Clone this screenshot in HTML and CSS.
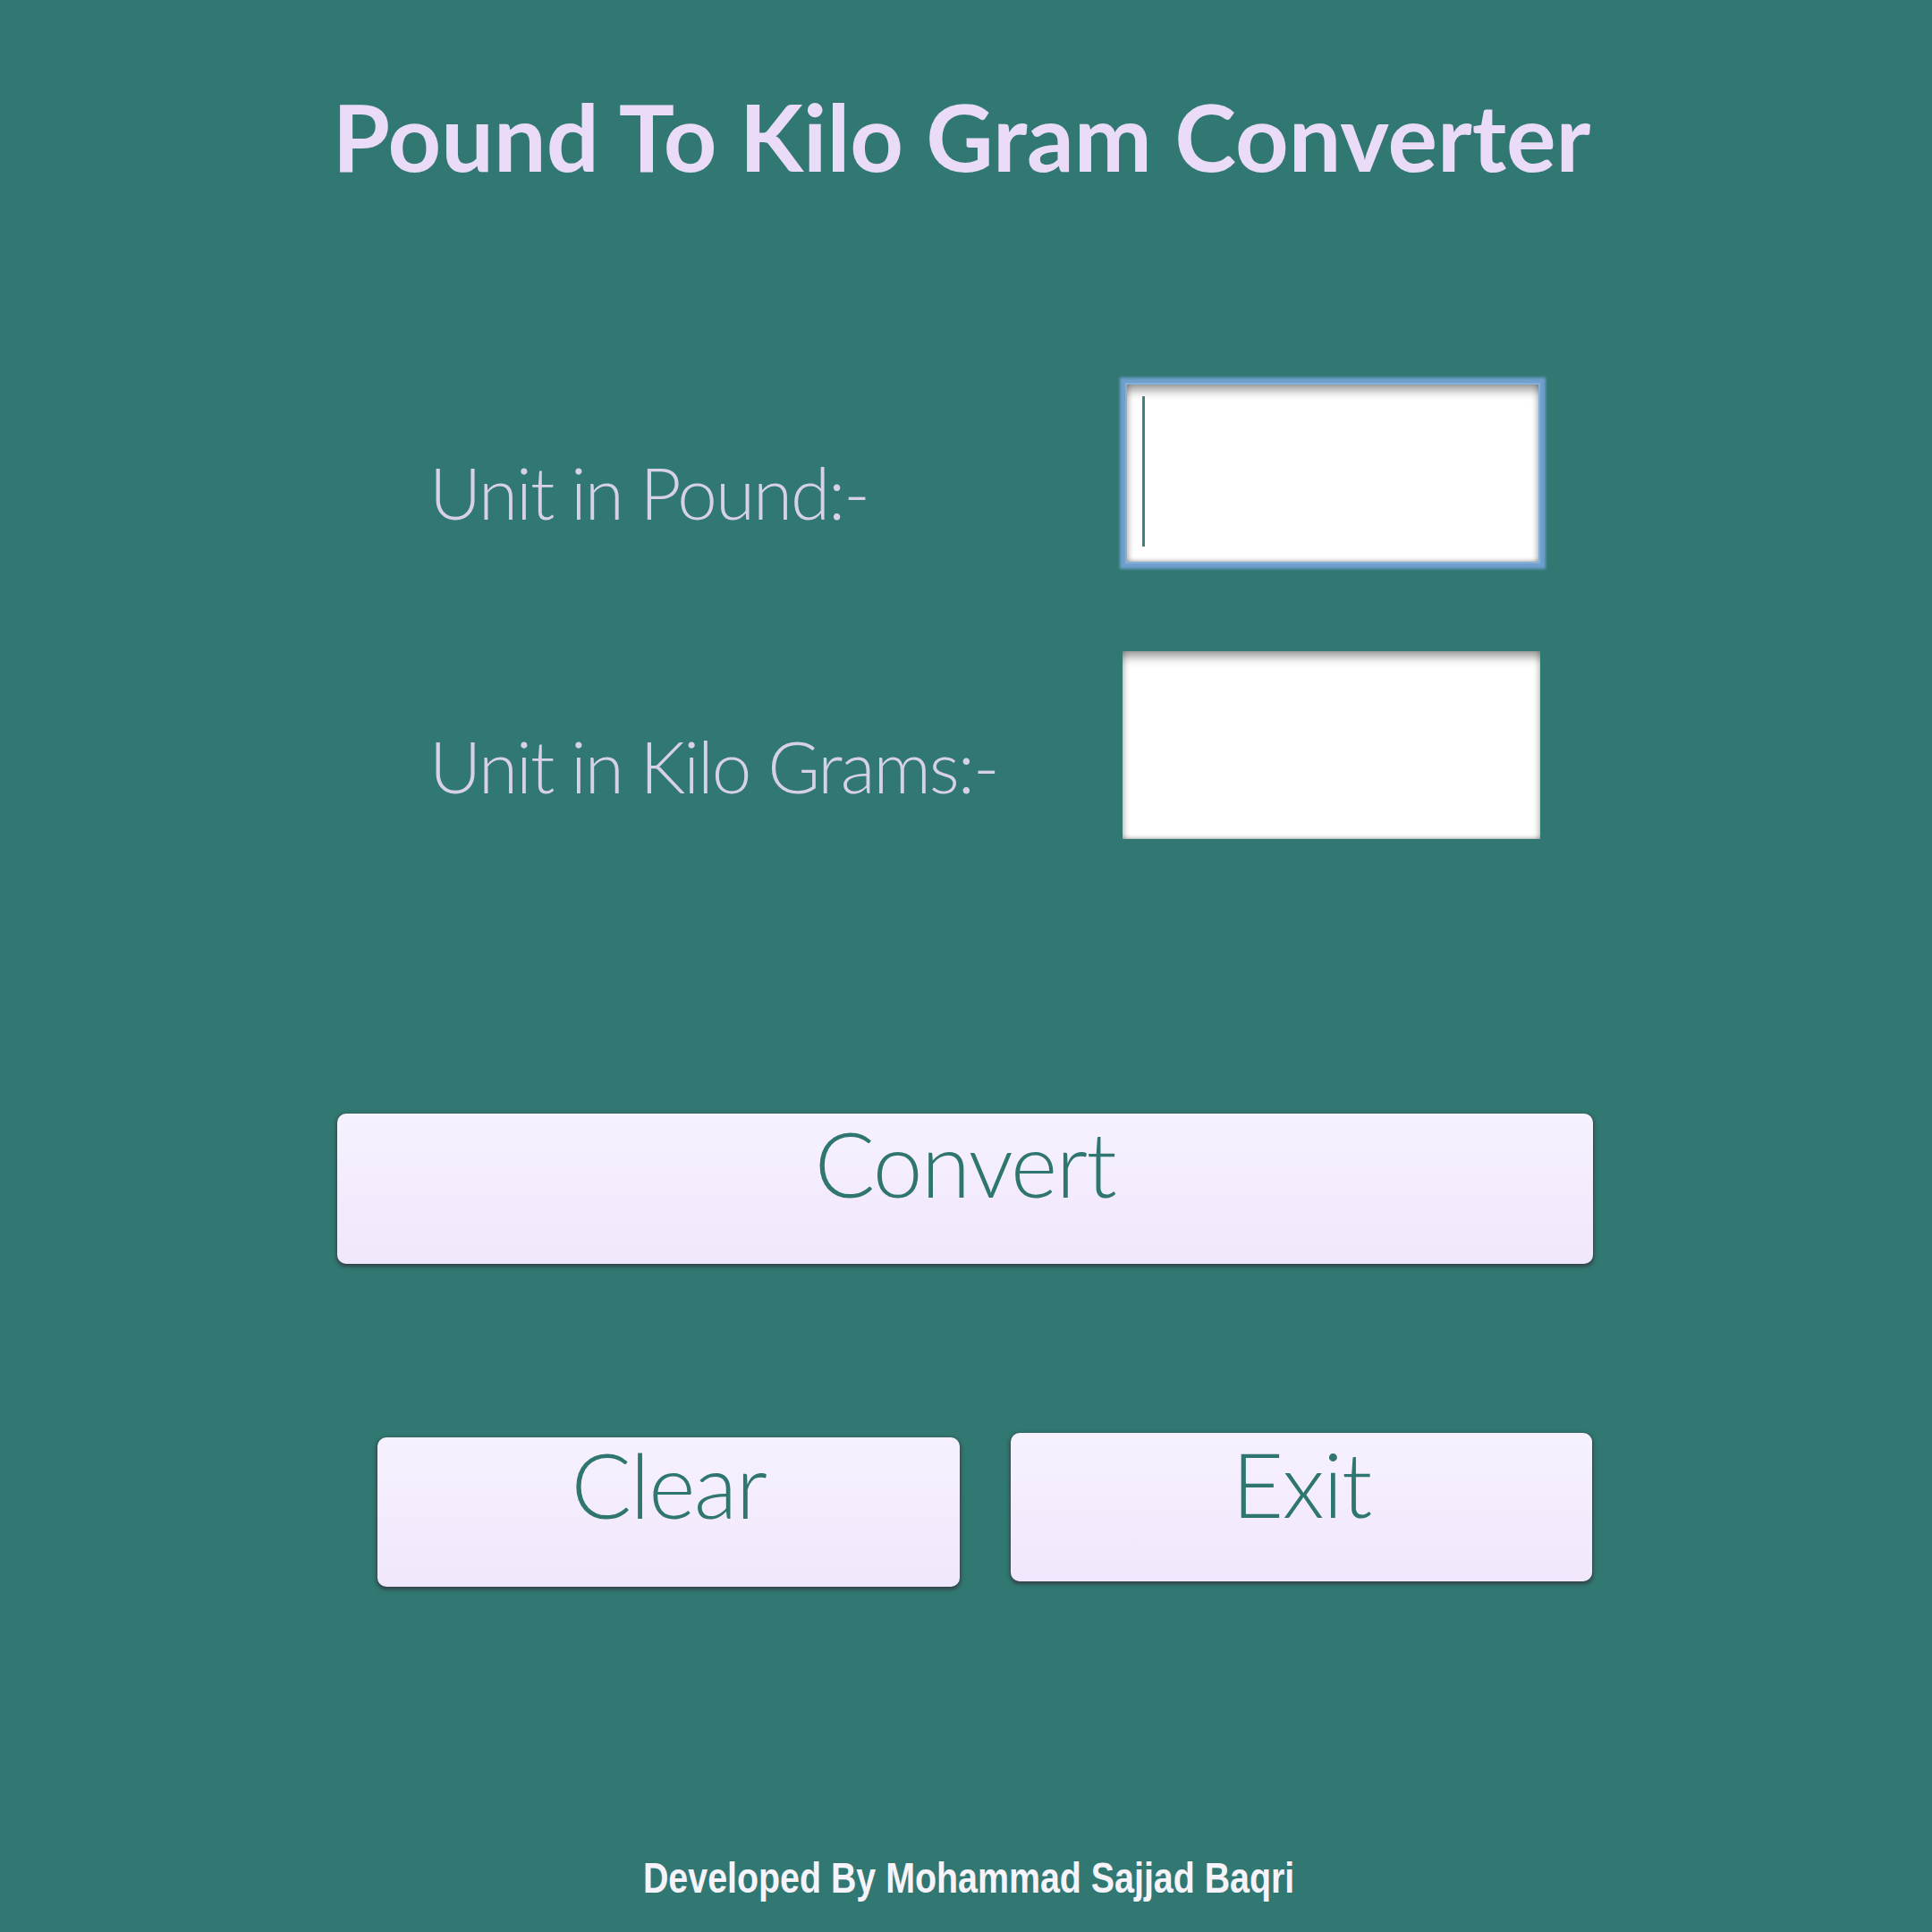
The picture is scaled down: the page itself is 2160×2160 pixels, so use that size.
FILE: index.html
```html
<!DOCTYPE html>
<html lang="en">
<head>
<meta charset="utf-8">
<title>Pound To Kilo Gram Converter</title>
<link rel="stylesheet" href="styles.css">
</head>
<body>
<div class="app">
  <h1 class="title">Pound To Kilo Gram Converter</h1>

  <div class="form">
    <div class="row row-pound">
      <label class="label">Unit in Pound:-</label>
      <div class="field field-focus"><span class="caret"></span></div>
    </div>
    <div class="row row-kilo">
      <label class="label">Unit in Kilo Grams:-</label>
      <div class="field field-kilo"></div>
    </div>
  </div>

  <button class="btn btn-convert">Convert</button>

  <div class="actions">
    <button class="btn btn-clear">Clear</button>
    <button class="btn btn-exit">Exit</button>
  </div>

  <p class="footer"><span class="footer-text">Developed By Mohammad Sajjad Baqri</span></p>
</div>
</body>
</html>
```

FILE: styles.css
```css
html, body {
  margin: 0;
  padding: 0;
  background: #317872;
}

.app {
  width: 2160px;
  height: 2160px;
  display: flex;
  flex-direction: column;
  font-family: "Lato", "Open Sans", sans-serif;
}

.title {
  margin: 100px 0 0 0;
  text-align: center;
  font-family: "Lato", "Open Sans", sans-serif;
  font-weight: 700;
  font-size: 104px;
  line-height: 1;
  color: #eadcf8;
  padding-right: 10px;
}

.form {
  margin-top: 226px;
  padding-left: 480px;
  display: flex;
  flex-direction: column;
  gap: 100px;
}

.row {
  display: flex;
  align-items: flex-start;
}

.label {
  width: 775px;
  font-weight: 300;
  font-size: 80px;
  letter-spacing: -2px;
  line-height: 1;
  color: #d7d1e8;
}

.row-pound .label { margin-top: 80px; }
.row-kilo .label { margin-top: 88px; }

.field {
  position: relative;
  background: #ffffff;
  box-shadow:
    inset 0 14px 12px -8px rgba(0, 0, 0, 0.42),
    inset 6px 0 6px -4px rgba(0, 0, 0, 0.25),
    inset -6px 0 6px -4px rgba(0, 0, 0, 0.25),
    inset 0 -5px 5px -4px rgba(0, 0, 0, 0.28);
}

.field-focus {
  margin-left: 5px;
  width: 460px;
  height: 198px;
  box-shadow:
    inset 0 14px 12px -8px rgba(0, 0, 0, 0.42),
    inset 6px 0 6px -4px rgba(0, 0, 0, 0.25),
    inset -6px 0 6px -4px rgba(0, 0, 0, 0.25),
    inset 0 -5px 5px -4px rgba(0, 0, 0, 0.28),
    0 0 0 2px #86b0d8,
    0 0 3px 8px #6f9fce;
}

.field-kilo {
  width: 467px;
  height: 210px;
}

.caret {
  position: absolute;
  left: 17px;
  top: 13px;
  width: 3px;
  height: 168px;
  background: #3f847d;
}

.btn {
  display: flex;
  justify-content: center;
  align-items: flex-start;
  box-sizing: border-box;
  border: none;
  border-radius: 10px;
  background: linear-gradient(#f7f1fe, #f0e7fc);
  box-shadow: 0 2px 4px 1px rgba(52, 50, 60, 0.8);
  font-family: "Lato", "Open Sans", sans-serif;
  font-weight: 300;
  font-size: 100px;
  letter-spacing: -1.5px;
  line-height: 1;
  color: #2f7570;
  text-align: center;
  padding: 5px 0 0 0;
  margin: 0;
  cursor: pointer;
}

.btn-convert {
  margin: 307px 0 0 377px;
  width: 1404px;
  height: 168px;
}

.actions {
  margin: 189px 0 0 422px;
  display: flex;
  align-items: flex-start;
  gap: 57px;
}

.btn-clear {
  margin-top: 5px;
  width: 651px;
  height: 167px;
  padding-top: 2px;
}

.btn-exit {
  width: 650px;
  height: 166px;
  padding-top: 6px;
}

.footer {
  margin: 302px 0 0 0;
  text-align: center;
  font-family: "Liberation Sans", Arial, sans-serif;
  font-weight: 700;
  font-size: 48px;
  line-height: 1;
  color: #f7f3fb;
  padding-left: 6px;
}

.footer-text {
  display: inline-block;
  transform: scaleX(0.82);
  transform-origin: center;
}
```
